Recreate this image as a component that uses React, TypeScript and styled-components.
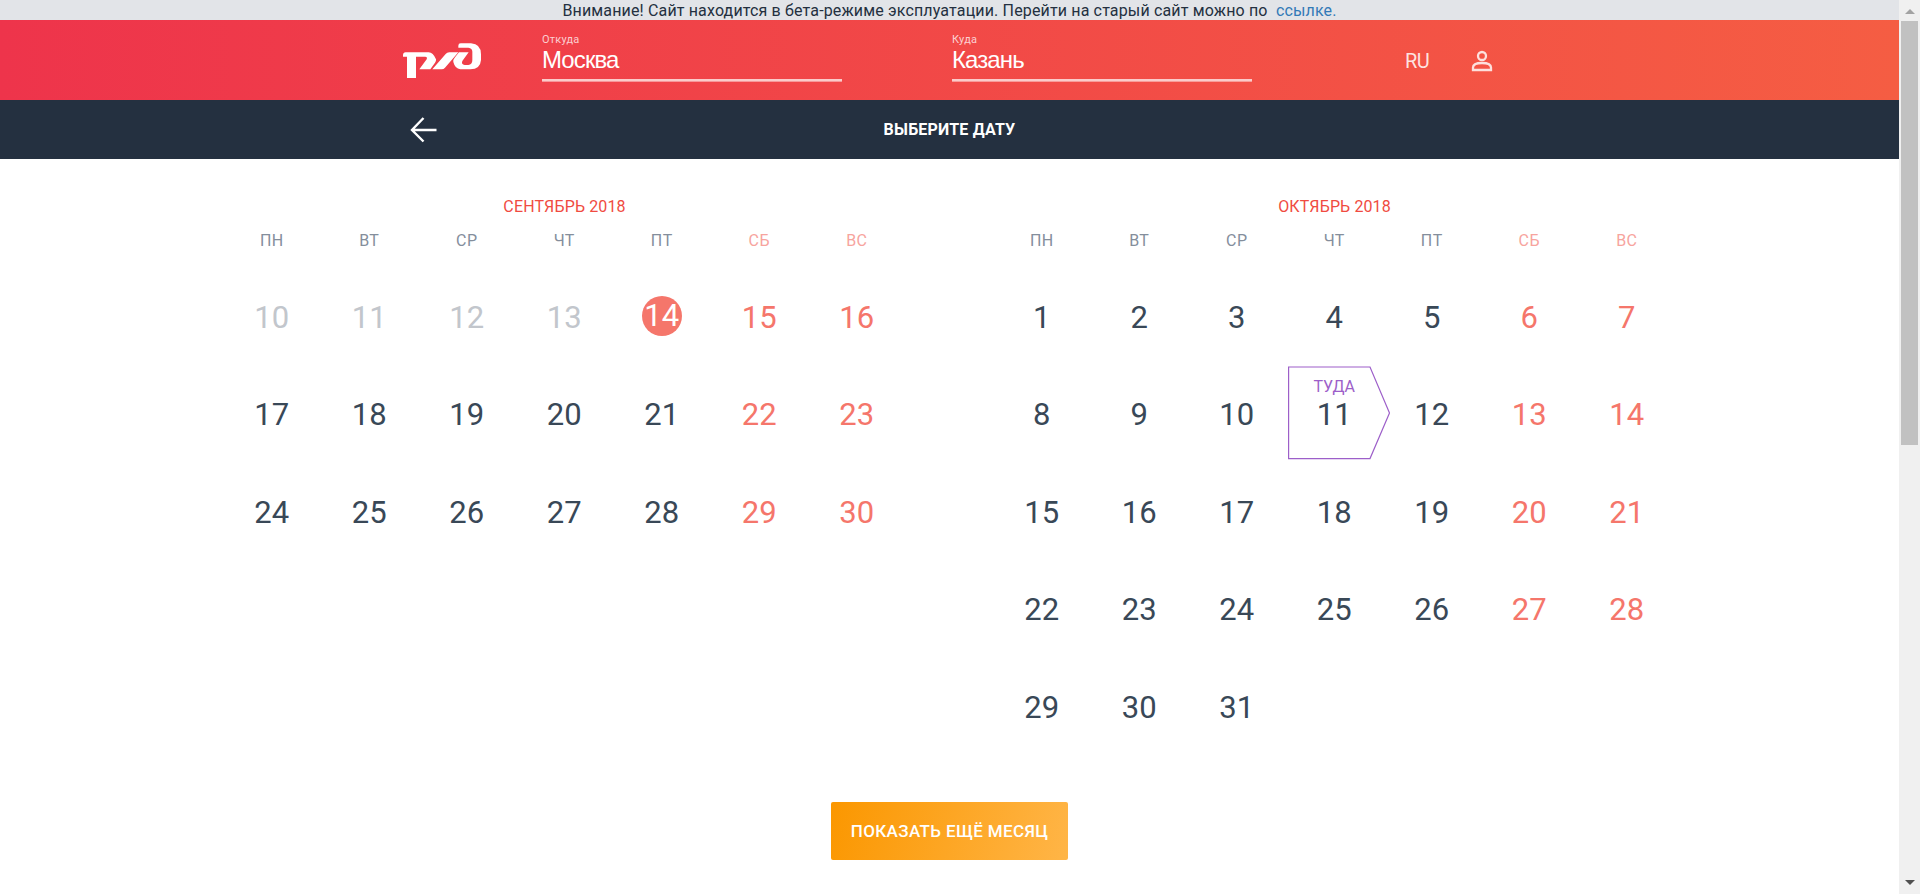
import React from "react";
import styled, { createGlobalStyle } from "styled-components";

const GlobalStyle = createGlobalStyle`
  * { box-sizing: border-box; }
  body { margin: 0; background: #fff; overflow: hidden; font-family: Roboto, "Liberation Sans", sans-serif; }
`;

const Window = styled.div`
  display: grid;
  grid-template-columns: 1fr 21px;
  height: 894px;
`;
const Page = styled.main`
  display: flex;
  flex-direction: column;
  overflow: hidden;
`;
const Notice = styled.div`
  height: 20px;
  background: #e2e4e8;
  color: #243040;
  font-size: 16px;
  line-height: 21px;
  letter-spacing: 0.15px;
  text-align: center;
  white-space: pre;
`;
const NoticeLink = styled.a`
  color: #337ab7;
  text-decoration: none;
`;
const Header = styled.header`
  height: 80px;
  flex: none;
  display: flex;
  align-items: flex-start;
  padding-left: 402px;
  background: linear-gradient(90deg, #ee344b, #f55d43);
`;
const Logo = styled.svg`
  display: block;
  width: 79px;
  height: 36px;
  margin: 22px 61px 0 0;
`;
const Field = styled.label`
  width: 300px;
  height: 61px;
  margin-right: 110px;
  padding-top: 13px;
  border-bottom: 2px solid #fbcbca;
  box-shadow: 0 1px 0 rgba(255, 255, 255, 0.45);
  display: flex;
  flex-direction: column;
`;
const FieldName = styled.span`
  font-size: 11px;
  line-height: 13px;
  letter-spacing: 0.2px;
  color: rgba(255, 255, 255, 0.75);
`;
const FieldValue = styled.span`
  font-family: "Liberation Sans", Arial, sans-serif;
  font-size: 24px;
  line-height: 28px;
  letter-spacing: -0.9px;
  color: #fff;
`;
const Language = styled.span`
  margin: 30px 42px 0 43px;
  font-size: 20px;
  line-height: 22px;
  letter-spacing: -0.5px;
  color: rgba(255, 255, 255, 0.85);
`;
const UserIcon = styled.svg`
  display: block;
  margin-top: 30px;
`;
const TitleBar = styled.div`
  height: 59px;
  flex: none;
  display: grid;
  grid-template-columns: 1fr auto 1fr;
  align-items: center;
  padding-left: 410px;
  padding-right: 410px;
  background: #243040;
`;
const Title = styled.h1`
  margin: 0;
  font-size: 16px;
  font-weight: 700;
  line-height: 20px;
  letter-spacing: 0.2px;
  color: #fff;
`;
const Months = styled.section`
  display: flex;
  gap: 87px;
  padding: 37px 0 0 223px;
`;
const MonthBox = styled.div`
  width: 683px;
`;
const MonthName = styled.h2`
  margin: 0;
  font-size: 16px;
  font-weight: 400;
  line-height: 22px;
  letter-spacing: 0.13px;
  text-align: center;
  color: #f04b41;
`;
const Days = styled.div`
  display: grid;
  grid-template-columns: repeat(7, 97.5px);
  grid-auto-rows: 97.5px;
`;
const WeekRow = styled.div`
  display: grid;
  grid-template-columns: repeat(7, 97.5px);
  margin-top: 12px;
  height: 38px;
`;
const WeekDay = styled.span<{ $off: boolean }>`
  font-size: 16px;
  line-height: 22px;
  letter-spacing: 0.4px;
  text-align: center;
  color: ${(p) => (p.$off ? "#f7a49e" : "#848e9c")};
`;
type Kind = "past" | "work" | "off" | "today";
const dayColors: Record<Kind, string> = { past: "#c2c6cc", work: "#394857", off: "#f5766b", today: "#fff" };
const Day = styled.div<{ $kind: Kind }>`
  position: relative;
  display: flex;
  align-items: center;
  justify-content: center;
  font-size: 31px;
  line-height: 40px;
  padding-top: 2px;
  color: ${(p) => dayColors[p.$kind]};
`;
const Today = styled.span`
  width: 40px;
  height: 40px;
  margin-bottom: 4px;
  border-radius: 50%;
  text-align: center;
  background: #f5766b;
`;
const TripFrame = styled.svg`
  position: absolute;
  left: 2.5px;
  top: 0.5px;
`;
const TripLabel = styled.span`
  position: absolute;
  top: 10px;
  left: 0;
  right: 0;
  font-size: 16px;
  line-height: 22px;
  text-align: center;
  color: #9d5fc9;
`;
const MoreButton = styled.button`
  width: 237px;
  height: 58px;
  margin: 46px auto 0;
  border: 0;
  border-radius: 2px;
  background: linear-gradient(105deg, #fb9700, #ffb547);
  color: #fff;
  font: 500 17px/22px Roboto, sans-serif;
  letter-spacing: 0.36px;
  white-space: nowrap;
`;
const Scrollbar = styled.div`
  display: grid;
  grid-template-rows: 21px 1fr 21px;
  justify-items: center;
  background: #f0f0f0;
`;
const ScrollThumb = styled.div`
  width: 17px;
  height: 424px;
  background: #c1c1c1;
`;
const ScrollArrow = styled.svg`
  display: block;
`;

const weekNames = ["ПН", "ВТ", "СР", "ЧТ", "ПТ", "СБ", "ВС"];

type MonthProps = { name: string; first: number; last: number; today?: number; trip?: number };

function Month({ name, first, last, today = 0, trip }: MonthProps) {
  const days = Array.from({ length: last - first + 1 }, (_, i) => first + i);
  const kindOf = (day: number, i: number): Kind =>
    day === today ? "today" : day < today ? "past" : i % 7 > 4 ? "off" : "work";
  return (
    <MonthBox>
      <MonthName>{name}</MonthName>
      <WeekRow>
        {weekNames.map((w, i) => (
          <WeekDay key={w} $off={i > 4}>{w}</WeekDay>
        ))}
      </WeekRow>
      <Days>
        {days.map((day, i) => (
          <Day key={day} $kind={kindOf(day, i)}>
            {day === trip && (
              <>
                <TripFrame width="103" height="94" viewBox="0 0 103 94" fill="none" stroke="#9d5fc9" strokeWidth="1.2">
                  <path d="M.6 1H82L101.500 47 82 92.600H.6z" />
                </TripFrame>
                <TripLabel>ТУДА</TripLabel>
              </>
            )}
            {day === today ? <Today>{day}</Today> : day}
          </Day>
        ))}
      </Days>
    </MonthBox>
  );
}

export default function App() {
  return (
    <>
      <GlobalStyle />
      <Window>
        <Page>
          <Notice>
            Внимание! Сайт находится в бета-режиме эксплуатации. Перейти на старый сайт можно по{"  "}
            <NoticeLink>ссылке.</NoticeLink>
          </Notice>
          <Header>
            <Logo viewBox="0 0 237 108" fill="#fff">
              <path d="M3 40Q3 31 11 31H80Q93 31 102 52Q103 56 99 62L85 82H52L74 52Q77 44 69 44H42V109H15V44H3z" />
              <path d="M91 82L131 36Q135 31 142 31H169L129 77Q125 82 119 82z" />
              <path d="M169 11Q169 4 176 4H207Q237 6 237 37V54Q235 82 205 82H175Q159 80 154 60Q153 53 159 46L171 31H200L181 57Q177 68 188 69H199Q211 68 211 54V29Q211 18 199 17H169z" />
            </Logo>
            <Field>
              <FieldName>Откуда</FieldName>
              <FieldValue>Москва</FieldValue>
            </Field>
            <Field>
              <FieldName>Куда</FieldName>
              <FieldValue>Казань</FieldValue>
            </Field>
            <Language>RU</Language>
            <UserIcon width="22" height="22" viewBox="0 0 22 22" fill="none" stroke="#fde0dd" strokeWidth="2.3">
              <circle cx="11" cy="6" r="4" />
              <path d="M2 20V17.500Q2 13 11 13T20 17.500V20z" />
            </UserIcon>
          </Header>
          <TitleBar>
            <svg width="28" height="26" viewBox="0 0 28 26" fill="none" stroke="#fff" strokeWidth="2.400">
              <path d="M13.500 1L2 13 13.500 24.500M1.500 13H26.500" />
            </svg>
            <Title>ВЫБЕРИТЕ ДАТУ</Title>
          </TitleBar>
          <Months>
            <Month name="СЕНТЯБРЬ 2018" first={10} last={30} today={14} />
            <Month name="ОКТЯБРЬ 2018" first={1} last={31} trip={11} />
          </Months>
          <MoreButton>ПОКАЗАТЬ ЕЩЁ МЕСЯЦ</MoreButton>
        </Page>
        <Scrollbar>
          <ScrollArrow width="10" height="21" viewBox="0 0 10 21" fill="#a3a3a3">
            <path d="M0 14L5 9 10 14z" />
          </ScrollArrow>
          <ScrollThumb />
          <ScrollArrow width="10" height="21" viewBox="0 0 10 21" fill="#505050">
            <path d="M0 7H10L5 12z" />
          </ScrollArrow>
        </Scrollbar>
      </Window>
    </>
  );
}
